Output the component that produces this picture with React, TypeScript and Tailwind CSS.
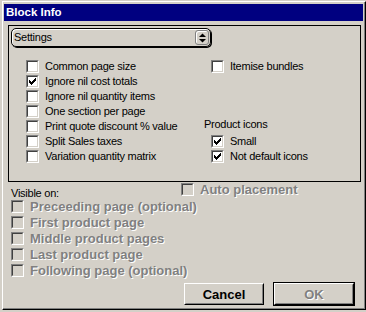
const sans = "font-['Liberation_Sans',Arial,sans-serif]";
const plain = "text-[11px] leading-none tracking-[-0.25px] text-black whitespace-nowrap";

function Tick() {
  const tops = [2, 3, 4, 3, 2, 1, 0];
  return (
    <svg width="7" height="7" viewBox="0 0 7 7" shapeRendering="crispEdges">
      {tops.map((y, x) => (
        <rect key={x} x={x} y={y} width="1" height="3" fill="#000" />
      ))}
    </svg>
  );
}

function Box({ checked = false, disabled = false }: { checked?: boolean; disabled?: boolean }) {
  return (
    <div className="w-[13px] h-[13px] shrink-0 flex border border-t-[#808080] border-l-[#808080] border-b-white border-r-white">
      <div
        className={`flex-1 flex items-center justify-center border border-t-[#404040] border-l-[#404040] border-b-[#d4d0c8] border-r-[#d4d0c8] ${
          disabled ? "bg-[#d4d0c8]" : "bg-white"
        }`}
      >
        {checked && <Tick />}
      </div>
    </div>
  );
}

function Option({ label, checked }: { label: string; checked?: boolean }) {
  return (
    <div className="h-[15px] flex items-center gap-[6px]">
      <Box checked={checked} />
      <span className={plain}>{label}</span>
    </div>
  );
}

const greyed = "text-[13px] font-bold leading-none text-[#808080] whitespace-nowrap [text-shadow:1px_1px_0_#fff]";

function Greyed({ label }: { label: string }) {
  return (
    <div className="h-[16px] flex items-center gap-[6px]">
      <Box disabled />
      <span className={greyed}>{label}</span>
    </div>
  );
}

function Button({ label, isDefault, disabled }: { label: string; isDefault?: boolean; disabled?: boolean }) {
  const face = (
    <div className="w-[80px] h-[22px] flex border border-t-white border-l-white border-r-black border-b-black">
      <div className="flex-1 flex items-center justify-center border border-t-[#d4d0c8] border-l-[#d4d0c8] border-r-[#808080] border-b-[#808080]">
        <span className={disabled ? greyed : "text-[13px] font-bold leading-none text-black"}>{label}</span>
      </div>
    </div>
  );
  return isDefault ? <div className="border border-black">{face}</div> : face;
}

const leftOptions = [
  { label: "Common page size" },
  { label: "Ignore nil cost totals", checked: true },
  { label: "Ignore nil quantity items" },
  { label: "One section per page" },
  { label: "Print quote discount % value" },
  { label: "Split Sales taxes" },
  { label: "Variation quantity matrix" },
];

const pages = [
  "Preceeding page (optional)",
  "First product page",
  "Middle product pages",
  "Last product page",
  "Following page (optional)",
];

export default function App() {
  return (
    <div className={`w-[366px] h-[312px] bg-[#d4d0c8] pl-[2px] pt-[1px] pb-[2px] overflow-hidden ${sans}`}>
      <div className="h-full border border-t-white border-l-white border-r-black border-b-black">
        <div className="h-full flex flex-col border-r border-b border-r-[#808080] border-b-[#808080] pl-[1px] pr-[1px] pt-[2px]">
          <div className="h-[17px] shrink-0 bg-[#000080] pl-[2px] flex items-center">
            <span className="text-white font-bold text-[11.5px] leading-none">Block Info</span>
          </div>

          <div className="ml-[4px] mr-[2px] mt-[4px] h-[157px] shrink-0 border border-black">
            <div className="ml-[2px] mt-[2px] w-[200px] h-[19px] rounded-[5px] border border-black shadow-[1px_1px_0_#000,inset_1px_1px_0_#fff] flex items-center pl-[2px] pr-[1px]">
              <span className={`flex-1 ${plain}`}>Settings</span>
              <div className="w-[14px] h-[15px] rounded-[3px] border border-[#808080] shadow-[inset_1px_1px_0_#fff] flex items-center justify-center">
                <svg width="7" height="10" viewBox="0 0 7 10">
                  <polygon points="0,4 3.5,0.5 7,4" fill="#000" />
                  <polygon points="0,6 7,6 3.5,9.5" fill="#000" />
                </svg>
              </div>
            </div>

            <div className="mt-[12px] pl-[17px] flex">
              <div className="w-[178px]">
                {leftOptions.map((o) => (
                  <Option key={o.label} label={o.label} checked={o.checked} />
                ))}
              </div>
              <div>
                <div className="pl-[7px]">
                  <Option label="Itemise bundles" />
                </div>
                <div className="h-[45px]" />
                <div className="h-[15px] flex items-center -mt-[2px] mb-[2px]">
                  <span className={plain}>Product icons</span>
                </div>
                <div className="pl-[7px]">
                  <Option label="Small" checked />
                  <Option label="Not default icons" checked />
                </div>
              </div>
            </div>
          </div>

          <div className="h-[16px] shrink-0 flex items-start">
            <div className="w-[177px] pl-[7px] pt-[6px] flex">
              <span className={plain}>Visible on:</span>
            </div>
            <div className="h-[15px] flex items-center gap-[6px]">
              <Box disabled />
              <span className={greyed}>Auto placement</span>
            </div>
          </div>

          <div className="pl-[7px] shrink-0">
            {pages.map((p) => (
              <Greyed key={p} label={p} />
            ))}
          </div>

          <div className="mt-[4px] pr-[8px] shrink-0 flex justify-end items-center gap-[9px]">
            <Button label="Cancel" />
            <Button label="OK" isDefault disabled />
          </div>
        </div>
      </div>
    </div>
  );
}
